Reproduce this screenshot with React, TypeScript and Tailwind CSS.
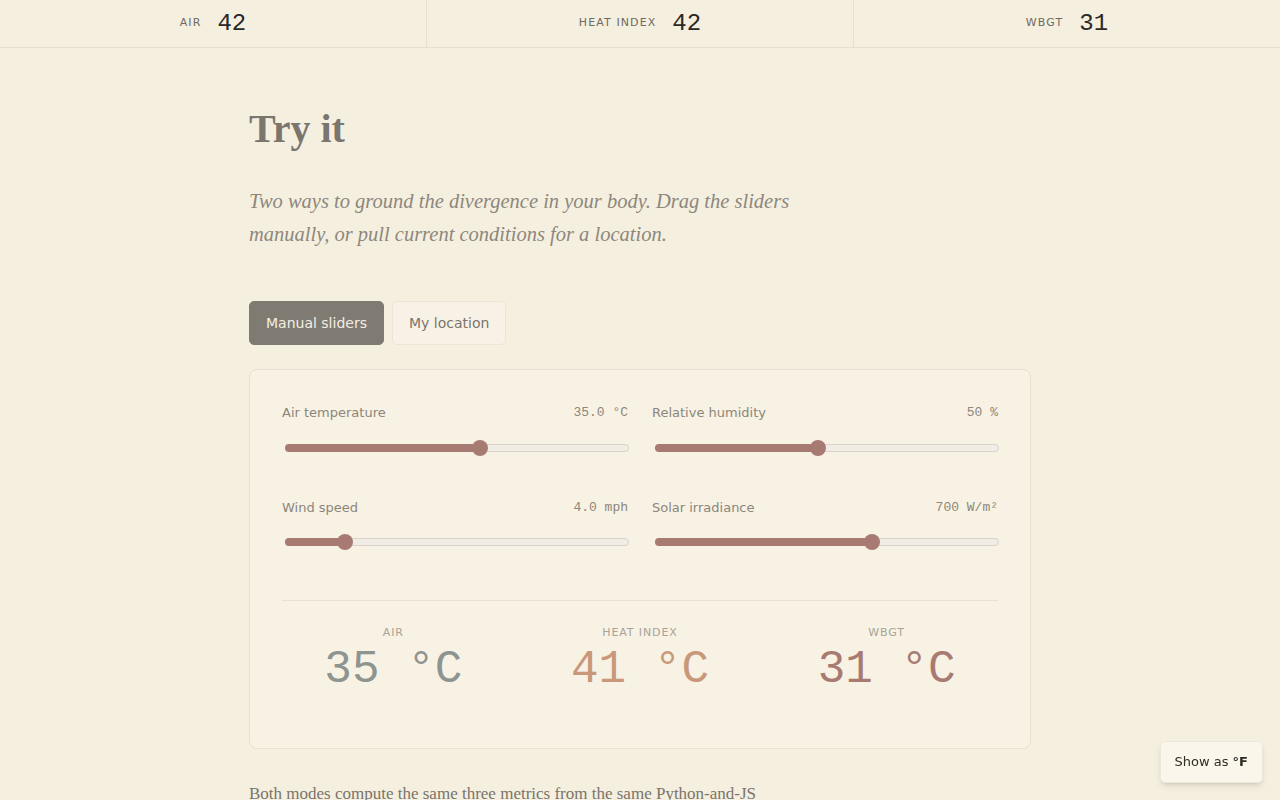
import { useState } from 'react';

const SANS = "font-['DejaVu_Sans',sans-serif]";
const MONO = "font-['Liberation_Mono',monospace]";
const SERIF = "font-['Liberation_Serif',serif]";

interface SliderDef {
  key: string;
  label: string;
  min: number;
  max: number;
  value: number;
  fmt: (v: number) => string;
}

const SLIDERS: SliderDef[] = [
  { key: 'air', label: 'Air temperature', min: 15, max: 50, value: 35, fmt: (v) => `${v.toFixed(1)} °C` },
  { key: 'rh', label: 'Relative humidity', min: 5, max: 100, value: 50, fmt: (v) => `${Math.round(v)} %` },
  { key: 'wind', label: 'Wind speed', min: 0, max: 25, value: 4, fmt: (v) => `${v.toFixed(1)} mph` },
  { key: 'solar', label: 'Solar irradiance', min: 0, max: 1100, value: 700, fmt: (v) => `${Math.round(v)} W/m²` },
];

function Slider({ def }: { def: SliderDef }) {
  const pct = (def.value - def.min) / (def.max - def.min);
  // thumb center runs from 8px to (width - 8px)
  const pos = `calc(8px + (100% - 16px) * ${pct})`;
  return (
    <div>
      <div className="flex items-center justify-between">
        <span className={`${SANS} text-[13px] text-[#8c867b]`}>{def.label}</span>
        <span className={`${MONO} text-[13px] text-[#8c867b]`}>{def.fmt(def.value)}</span>
      </div>
      <div className="relative mt-[17px] h-4 ml-[3px] -mr-[1px]">
        <div className="absolute left-0 right-0 top-[4px] h-[8px] rounded-full border border-[#d9d3c9] bg-[#f1ede6]" />
        <div className="absolute left-0 top-[4px] h-[8px] rounded-full bg-[#a87b72]" style={{ width: pos }} />
        <div
          className="absolute top-0 h-4 w-4 -ml-2 rounded-full bg-[#a87b72]"
          style={{ left: pos }}
        />
      </div>
    </div>
  );
}

function TopStat({ label, value, last }: { label: string; value: string; last?: boolean }) {
  return (
    <div className={`flex-1 flex items-center justify-center gap-4 ${last ? '' : 'border-r border-[#e6dfcf]'}`}>
      <span className={`${SANS} text-[11px] tracking-[0.1em] uppercase text-[#6f6a61]`}>{label}</span>
      <span className={`${MONO} text-[24px] text-[#2b2825]`}>{value}</span>
    </div>
  );
}

function Result({ label, value, color }: { label: string; value: string; color: string }) {
  return (
    <div className="flex flex-col items-center">
      <span className={`${SANS} text-[11px] tracking-[0.08em] uppercase text-[#a8a396]`}>{label}</span>
      <span className={`${MONO} text-[46px] leading-[52px] mt-[2px] ${color}`}>{value}</span>
    </div>
  );
}

export default function App() {
  const [mode, setMode] = useState<'manual' | 'location'>('manual');

  return (
    <div className="min-h-screen bg-[#f5efe0]">
      {/* Top bar */}
      <div className="h-12 flex border-b border-[#e6dfcf]">
        <TopStat label="Air" value="42" />
        <TopStat label="Heat index" value="42" />
        <TopStat label="WBGT" value="31" last />
      </div>

      <div className="w-[782px] mx-auto pt-[56px]">
        <h1 className={`${SERIF} font-bold text-[40px] leading-[50px] text-[#7a766d]`}>Try it</h1>
        <p className={`${SERIF} italic text-[20.5px] leading-[33px] text-[#8d877c] mt-[31px] max-w-[560px]`}>
          Two ways to ground the divergence in your body. Drag the sliders manually, or pull current conditions for a location.
        </p>

        <div className="flex gap-2 mt-[50px]">
          <button
            onClick={() => setMode('manual')}
            className={`${SANS} h-11 px-4 rounded-[5px] text-[14px] border ${
              mode === 'manual'
                ? 'bg-[#7f7b72] border-[#7f7b72] text-[#f3eee4]'
                : 'bg-[#f8f2e6] border-[#ece5d6] text-[#7a756c]'
            }`}
          >
            Manual sliders
          </button>
          <button
            onClick={() => setMode('location')}
            className={`${SANS} h-11 px-4 rounded-[5px] text-[14px] border ${
              mode === 'location'
                ? 'bg-[#7f7b72] border-[#7f7b72] text-[#f3eee4]'
                : 'bg-[#f8f2e6] border-[#ece5d6] text-[#7a756c]'
            }`}
          >
            My location
          </button>
        </div>

        {/* Card */}
        <div className="mt-6 rounded-lg border border-[#e9e2d2] bg-[#f8f2e4] px-8 pt-[33px] pb-[52px]">
          <div className="grid grid-cols-2 gap-x-6 gap-y-[42px]">
            {SLIDERS.map((s) => (
              <Slider key={s.key} def={s} />
            ))}
          </div>

          <div className="mt-[50px] border-t border-[#e9e2d2] pt-[24px] grid grid-cols-3 gap-6">
            <Result label="Air" value="35 °C" color="text-[#8e9490]" />
            <Result label="Heat index" value="41 °C" color="text-[#c9987a]" />
            <Result label="WBGT" value="31 °C" color="text-[#a87b72]" />
          </div>
        </div>

        <p className={`${SERIF} text-[17px] leading-[30px] text-[#7a756b] mt-[30px] max-w-[560px]`}>
          Both modes compute the same three metrics from the same Python-and-JS formulas, so the numbers always agree.
        </p>
      </div>

      <button
        className={`${SANS} fixed right-[17px] bottom-[17px] h-[42px] px-[14px] rounded-[5px] bg-[#fbf6ec] border border-[#efe8da] shadow-md text-[13px] text-[#2f2c28]`}
      >
        Show as <span className="font-bold">°F</span>
      </button>
    </div>
  );
}
